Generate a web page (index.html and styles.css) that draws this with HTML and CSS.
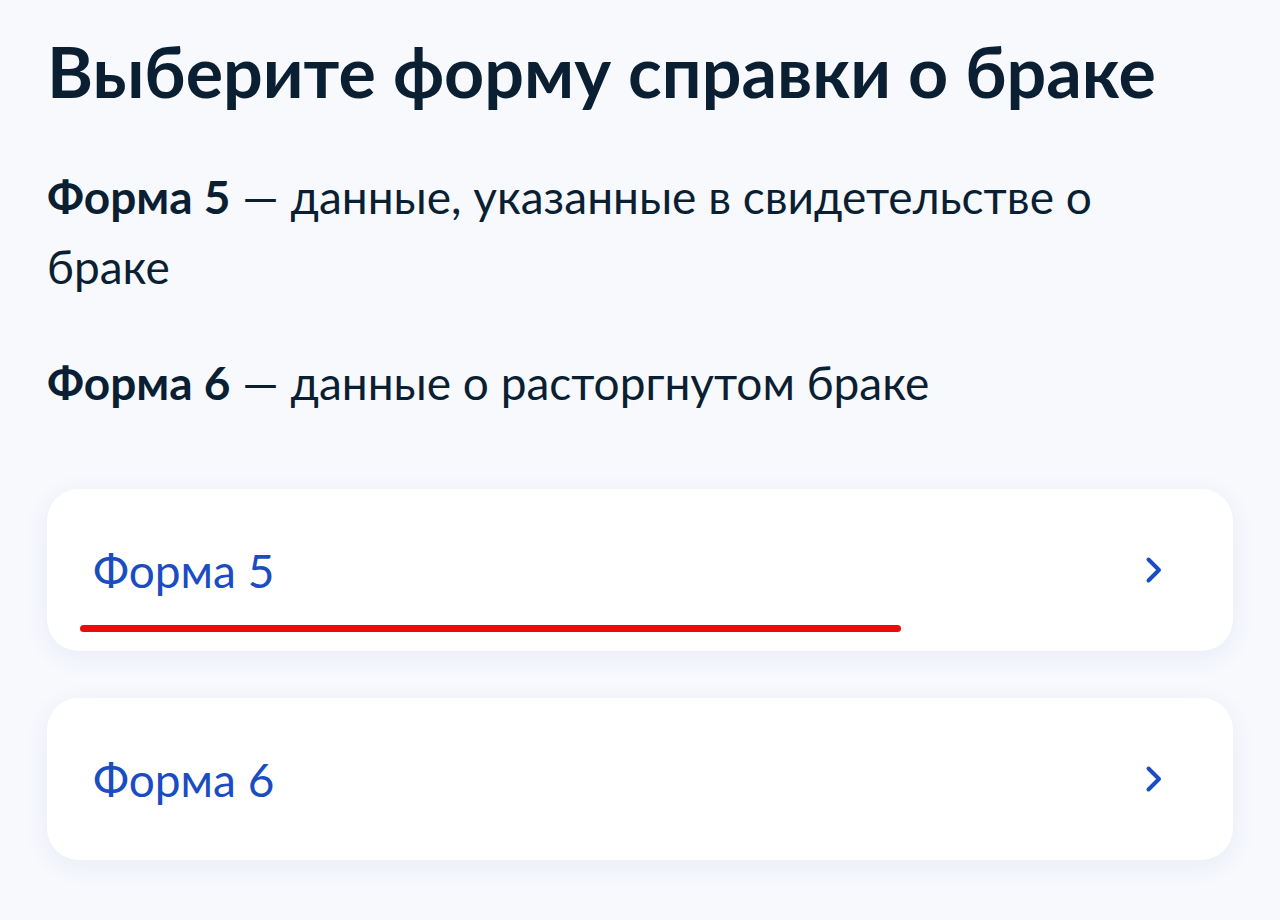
FILE: index.html
```html
<!DOCTYPE html>
<html lang="ru">
<head>
    <meta charset="UTF-8">
    <meta name="viewport" content="width=device-width, initial-scale=1.0">
    <title>Выберите форму справки о браке</title>
    <link rel="stylesheet" href="styles.css">
</head>
<body>
    <div class="page">
        <h1 class="title">Выберите форму справки о браке</h1>

        <p class="info"><b>Форма 5</b> — данные, указанные в свидетельстве о браке</p>
        <p class="info"><b>Форма 6</b> — данные о расторгнутом браке</p>

        <div class="options">
            <a class="option" href="#">
                <span>Форма 5</span>
                <svg class="chevron" viewBox="0 0 18 28" width="18" height="28"><path d="M3.5 3.5l10.5 10.5-10.5 10.5" fill="none" stroke="currentColor" stroke-width="4" stroke-linecap="round" stroke-linejoin="round"/></svg>
                <i class="mark"></i>
            </a>
            <a class="option" href="#">
                <span>Форма 6</span>
                <svg class="chevron" viewBox="0 0 18 28" width="18" height="28"><path d="M3.5 3.5l10.5 10.5-10.5 10.5" fill="none" stroke="currentColor" stroke-width="4" stroke-linecap="round" stroke-linejoin="round"/></svg>
            </a>
        </div>
    </div>
</body>
</html>
```

FILE: styles.css
```css
body, html {
    margin: 0;
    height: 100%;
    background-color: #f8f9fd;
    color: #0b1f33;
    font-family: Lato, "Noto Sans", sans-serif;
}
.page {
    padding: 29px 47px 0 47px;
}
.title {
    margin: 0;
    font-size: 70px;
    font-weight: 700;
    line-height: 84px;
}
.info {
    margin: 49px 0 0 0;
    max-width: 1110px;
    font-size: 46px;
    line-height: 70px;
}
.info + .info {
    margin-top: 46px;
}
.info b {
    font-weight: 700;
}
.options {
    display: flex;
    flex-direction: column;
    gap: 47px;
    margin-top: 71px;
}
.option {
    position: relative;
    display: flex;
    align-items: center;
    justify-content: space-between;
    height: 162px;
    padding: 0 70px 0 46px;
    background-color: #fff;
    border-radius: 32px;
    box-shadow: 0 6px 26px rgba(30, 60, 170, 0.07);
    color: #1a4cc2;
    text-decoration: none;
    font-size: 46px;
}
.chevron {
    color: #1a4cc2;
}
.mark {
    position: absolute;
    left: 33px;
    top: 136px;
    width: 821px;
    height: 7px;
    border-radius: 4px;
    background-color: #ee0a0a;
}
```
